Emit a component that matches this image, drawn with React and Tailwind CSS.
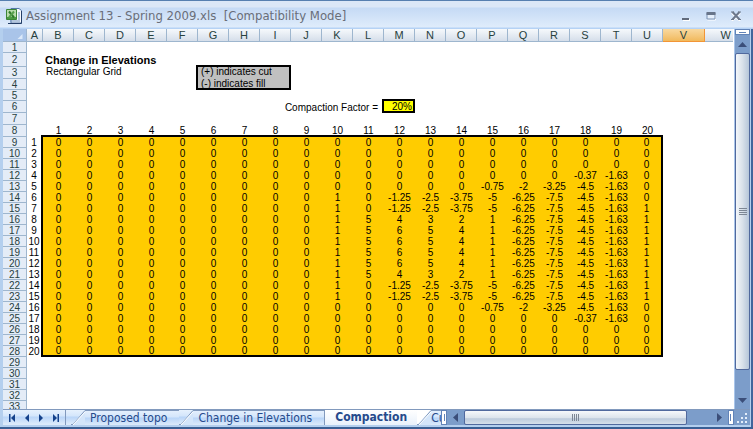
import React from 'react'

const COLUMNS = 'ABCDEFGHIJKLMNOPQRSTUVW'.split('')
const ROWS = Array.from({ length: 33 }, (_, i) => i + 1)

const zeros = (n) => Array(n).fill(0)

const flat = zeros(20)
const corner = [...zeros(17), -0.37, -1.63, 0]
const edge = [...zeros(14), -0.75, -2, -3.25, -4.5, -1.63, 0]
const slope = [...zeros(9), 1, 0, -1.25, -2.5, -3.75, -5, -6.25, -7.5, -4.5, -1.63]
const shoulder = [...zeros(9), 1, 5, 4, 3, 2, 1, -6.25, -7.5, -4.5, -1.63, 1]
const peak = [...zeros(9), 1, 5, 6, 5, 4, 1, -6.25, -7.5, -4.5, -1.63, 1]

const elevations = [
    flat, flat, flat, corner, edge,
    [...slope, 0], [...slope, 1],
    shoulder, peak, peak, peak, peak, shoulder,
    [...slope, 1], [...slope, 1],
    edge, corner, flat, flat, flat,
]

const rowHeight = (row) => {
    if (row === 2) return 'h-[14px]'
    if (row === 3 || (row >= 6 && row <= 8)) return 'h-[12px]'
    return 'h-[11px]'
}

const BLACK_RIGHT = 'border-r-2 border-black'
const BLACK_BOTTOM = 'border-b-2 border-black'
// closes the top-left corner between two neighbouring borders
const BLACK_CORNER = 'shadow-[-2px_-2px_0_0_#000]'

function getCell(row, col) {
    const inGrid = row >= 9 && row <= 28

    if (inGrid && col === 0) return { text: row - 8, className: `text-center ${BLACK_RIGHT}` }
    if (inGrid && col <= 20) {
        let className = 'text-center bg-[#ffcc00]'
        if (row === 9 && col === 1) className += ` ${BLACK_CORNER}`
        if (col === 20) className += ` ${BLACK_RIGHT}`
        if (row === 28) className += ` ${BLACK_BOTTOM}`
        return { text: elevations[row - 9][col - 1], className }
    }
    if (row === 8 && col >= 1 && col <= 20) return { text: col, className: `text-center ${BLACK_BOTTOM}` }

    // cut / fill legend in G3:I4
    if (row === 2 && col >= 6 && col <= 8) return { className: BLACK_BOTTOM }
    if ((row === 3 || row === 4) && col === 5) return { className: BLACK_RIGHT }
    if (row === 3 && col === 6) return { text: '(+) indicates cut', span: 3, className: `bg-[#c0c0c0] pl-[3px] align-top ${BLACK_RIGHT} ${BLACK_CORNER}` }
    if (row === 4 && col === 6) return { text: '(-) indicates fill', span: 3, className: `bg-[#c0c0c0] pl-[3px] ${BLACK_RIGHT} ${BLACK_BOTTOM}` }

    if (row === 2 && col === 1) return { text: 'Change in Elevations', span: 5, className: 'pl-[2px] font-bold text-[11px]' }
    if (row === 3 && col === 1) return { text: 'Rectangular Grid', span: 4, className: 'pl-[3px] align-top' }

    // compaction factor
    if (row === 5 && col === 12) return { className: BLACK_BOTTOM }
    if (row === 6 && col === 8) return { text: 'Compaction Factor =', span: 4, className: `text-right pr-1 ${BLACK_RIGHT}` }
    if (row === 6 && col === 12) return { text: '20%', className: `bg-[#ffff00] text-right pr-px ${BLACK_RIGHT} ${BLACK_BOTTOM} ${BLACK_CORNER}` }

    return {}
}

function SheetRow({ row }) {
    const cells = []
    let col = 0
    while (col < COLUMNS.length) {
        const { text, span = 1, className = '' } = getCell(row, col)
        cells.push(
            <td key={col} colSpan={span} className={`p-0 whitespace-nowrap ${className}`}>{text}</td>
        )
        col += span
    }
    return (
        <tr className={rowHeight(row)}>
            <th scope="row" className="p-0 font-normal text-center text-[#27413e] bg-[#e4ecf7] border-b border-r border-[#9eb6ce]">
                {row}
            </th>
            {cells}
        </tr>
    )
}

function Sheet() {
    return (
        <div className="min-w-0 flex-1 overflow-hidden bg-white">
            <table className="w-[730px] table-fixed border-separate border-spacing-0 text-[10px] leading-[9px] text-black">
                <colgroup>
                    <col className="w-6" />
                    <col className="w-4" />
                    {COLUMNS.slice(1, 21).map((name) => <col key={name} className="w-[31px]" />)}
                    <col className="w-[42px]" />
                    <col className="w-7" />
                </colgroup>
                <thead className="text-[11px]">
                    <tr className="h-[13px]">
                        <td className="p-0 bg-[#a9c4e9] border-b border-r border-[#9eb6ce]">
                            <svg viewBox="0 0 22 11" className="block h-[11px] w-full">
                                <path d="M19 4v5h-5z" fill="#dce9f9" />
                            </svg>
                        </td>
                        {COLUMNS.map((name) => (
                            <th
                                key={name}
                                scope="col"
                                className={name === 'V'
                                    ? 'p-0 font-normal text-[#27413e] bg-linear-to-b from-[#f9d99f] to-[#f1b95b] border-b border-r border-[#f29536]'
                                    : `p-0 font-normal text-[#27413e] bg-linear-to-b from-[#f6f9fc] to-[#d5deea] border-b border-[#9eb6ce] ${name === 'W' ? 'text-right pr-[2px]' : 'border-r'}`}
                            >
                                {name}
                            </th>
                        ))}
                    </tr>
                </thead>
                <tbody>
                    {ROWS.map((row) => <SheetRow key={row} row={row} />)}
                </tbody>
            </table>
        </div>
    )
}

function ExcelIcon() {
    return (
        <svg viewBox="0 0 16 16" className="h-4 w-4 shrink-0">
            <path d="M5 .5h8l2.500 2v12.500H5z" fill="#f7faff" stroke="#5579a8" />
            <path d="M4 13h10M12 5h2M12 7h2M12 9h2M12 11h2" stroke="#7193bd" />
            <path d="M15.500 3v12.500H2" fill="none" stroke="#243f68" />
            <path d="M.5 1.500h10v10H.5z" fill="#b9dcae" stroke="#3c8537" />
            <path d="M1 9h9v2H1z" fill="#4b9b42" />
            <path d="M3 3.500l5 6" stroke="#2f7a2c" strokeWidth="2" />
            <path d="M8 3.500l-5 6" stroke="#57a04e" strokeWidth="2" />
        </svg>
    )
}

function TitleBar() {
    return (
        <header className="h-[29px] shrink-0 flex items-center pt-px pl-[6px] pr-3 border-t border-[#567fb0] bg-[linear-gradient(#dbe7f7_0,#dbe7f7_6px,#c5daf5_7px,#dfecfb_26px,#b5d2f5_27px)]">
            <ExcelIcon />
            <h1 className="ml-1 flex-1 whitespace-pre text-[13px] leading-5 text-[#696e79] font-['DejaVu_Sans_Condensed','DejaVu_Sans',sans-serif]">
                {'Assignment 13 - Spring 2009.xls  [Compatibility Mode]'}
            </h1>
            <div className="flex gap-[15px]">
                <button type="button" aria-label="Minimize">
                    <svg viewBox="0 0 10 10" className="h-[10px] w-[10px]">
                        <path d="M2 8h7v2H2z" fill="#fff" />
                        <path d="M1 7h7v2H1z" fill="#626b7c" />
                    </svg>
                </button>
                <button type="button" aria-label="Maximize">
                    <svg viewBox="0 0 10 10" className="h-[10px] w-[10px]">
                        <path d="M1.500 3h8v6h-8z" fill="none" stroke="#fff" />
                        <path d="M1 2h8v6H1z" fill="#e5effb" stroke="#7990b2" />
                        <path d="M.5 1h9v3h-9z" fill="#68758a" />
                    </svg>
                </button>
                <button type="button" aria-label="Close">
                    <svg viewBox="0 0 10 10" className="h-[10px] w-[10px]">
                        <path d="M1 2l8 8M9 2l-8 8" stroke="#fff" strokeWidth="2" />
                        <path d="M1.500 1l7 7.500M8.500 1l-7 7.500" stroke="#6d788b" strokeWidth="2" />
                        <path d="M0 1h3M7 1h3M0 8.500h3M7 8.500h3" stroke="#6d788b" />
                    </svg>
                </button>
            </div>
        </header>
    )
}

function VerticalScroll() {
    return (
        <div className="w-4 shrink-0 flex flex-col bg-[#7c9dca] border-l border-[#a9c5ea]">
            <div className="h-[6px] shrink-0 border border-[#6284b8] bg-white px-[3px] pt-[2px]">
                <div className="h-px bg-[#6284b8]" />
            </div>
            <button type="button" aria-label="Scroll up" className="h-[18px] shrink-0 flex items-center justify-center">
                <svg viewBox="0 0 9 5" className="h-[5px] w-[9px]"><path d="M4.500 0L9 5H0z" fill="#3b4e79" /></svg>
            </button>
            <div className="flex-1 min-h-0 flex flex-col items-center justify-center gap-px rounded-xs border border-[#51699d] bg-linear-to-r from-[#f4f7fa] via-[#d9e1ea] to-[#b6c6d9]">
                {[0, 1, 2, 3].map((i) => <span key={i} className="h-px w-2 bg-[#7d8795]" />)}
            </div>
            <button type="button" aria-label="Scroll down" className="h-[39px] shrink-0 flex items-end justify-center pb-[6px]">
                <svg viewBox="0 0 9 5" className="h-[5px] w-[9px]"><path d="M0 0h9L4.500 5z" fill="#3b4e79" /></svg>
            </button>
        </div>
    )
}

const navButtons = [
    { label: 'First sheet', path: 'M1 0h1.500v8H1zM7 0v8L3 4z' },
    { label: 'Previous sheet', path: 'M6 0v8L2 4z' },
    { label: 'Next sheet', path: 'M2 0v8l4-4z' },
    { label: 'Last sheet', path: 'M1 0v8l4-4zM5.500 0H7v8H5.500z' },
]

function SheetTab({ label, active, last }) {
    if (active) {
        return (
            <button type="button" role="tab" aria-selected="true" className="h-[15px] shrink-0 px-[10px] leading-[15px] font-bold border-l border-[#8199bd] bg-linear-to-b from-white to-[#e9f1fb]">
                {label}
            </button>
        )
    }
    return (
        <button type="button" role="tab" aria-selected="false" className="h-[15px] shrink-0 flex">
            <svg viewBox="0 0 14 15" className="h-[15px] w-[14px] shrink-0">
                <path d="M0 15L14 0v15z" fill="#d3e5fa" />
                {last && <path d="M0 15V0h14z" fill="#fff" />}
                <path d="M0 14.500h2L14 .5" fill="none" stroke="#8199bd" />
                <path d="M2 15L14 2" stroke="#fff" />
            </svg>
            <span className={`h-[15px] leading-[15px] border-t border-[#8199bd] bg-[linear-gradient(#e3effd_0,#d4e6fb_6px,#b9d5f8_7px,#dceafa_14px)] ${last ? 'pr-px' : 'pl-[5px] pr-3'}`}>
                {label}
            </span>
        </button>
    )
}

function BottomBar() {
    return (
        <footer className="h-4 shrink-0 grid grid-cols-[27fr_19fr] border-t border-[#8199bd]">
            <div className="min-w-0 flex overflow-hidden bg-[linear-gradient(#e6f1fd_0,#d4e6fb_6px,#b9d5f8_7px,#dceafa_14px)]">
                <nav className="w-[63px] shrink-0 flex items-center justify-between px-[5px] border-r border-[#8199bd]">
                    {navButtons.map(({ label, path }) => (
                        <button key={label} type="button" aria-label={label}>
                            <svg viewBox="0 0 8 8" className="h-2 w-2"><path d={path} fill="#15428b" /></svg>
                        </button>
                    ))}
                </nav>
                <div role="tablist" className="flex min-w-0 overflow-hidden pl-[5px] text-[12px] whitespace-nowrap text-[#254a8c] font-['DejaVu_Sans_Condensed','DejaVu_Sans',sans-serif]">
                    <SheetTab label="Proposed topo" />
                    <SheetTab label="Change in Elevations" />
                    <SheetTab label="Compaction" active />
                    <SheetTab label="Cu" last />
                </div>
            </div>
            <div className="min-w-0 flex bg-[#7c9dca]">
                <div className="w-[6px] shrink-0 flex justify-center border border-[#6284b8] bg-white py-[3px]">
                    <span className="w-px bg-[#6284b8]" />
                </div>
                <button type="button" aria-label="Scroll left" className="w-[17px] shrink-0 flex items-center justify-center">
                    <svg viewBox="0 0 5 9" className="h-[9px] w-[5px]"><path d="M5 0v9L0 4.500z" fill="#3b4e79" /></svg>
                </button>
                <div className="flex-1 flex items-center justify-center gap-px rounded-xs border border-[#51699d] bg-[linear-gradient(#f6f8fb,#dde4ec_50%,#bdcbdc_60%,#d6dfea)]">
                    {[0, 1, 2, 3].map((i) => <span key={i} className="h-[7px] w-px bg-[#7d8795]" />)}
                </div>
                <button type="button" aria-label="Scroll right" className="w-[41px] shrink-0 flex items-center justify-end pr-[6px]">
                    <svg viewBox="0 0 5 9" className="h-[9px] w-[5px]"><path d="M0 0v9l5-4.500z" fill="#3b4e79" /></svg>
                </button>
                <div className="w-[6px] shrink-0 flex justify-center border border-[#6284b8] bg-white py-[3px]">
                    <span className="w-px bg-[#6284b8]" />
                </div>
                <svg viewBox="0 0 16 15" className="h-[15px] w-4 shrink-0">
                    <path d="M11 3h2v2h-2zM7 7h2v2H7zM11 7h2v2h-2zM3 11h2v2H3zM7 11h2v2H7zM11 11h2v2h-2z" fill="#e4eefb" />
                </svg>
            </div>
        </footer>
    )
}

export default function App() {
    return (
        <div className="h-screen w-full flex flex-col overflow-hidden border-b-2 border-[#3a5f94] bg-[#b4cfee] font-['Liberation_Sans',Arial,sans-serif]">
            <TitleBar />
            <main className="min-h-0 flex-1 flex flex-col pl-[3px] pr-px pb-[2px] border-r-2 border-[#41659b]">
                <div className="min-h-0 flex-1 flex">
                    <Sheet />
                    <VerticalScroll />
                </div>
                <BottomBar />
            </main>
        </div>
    )
}
